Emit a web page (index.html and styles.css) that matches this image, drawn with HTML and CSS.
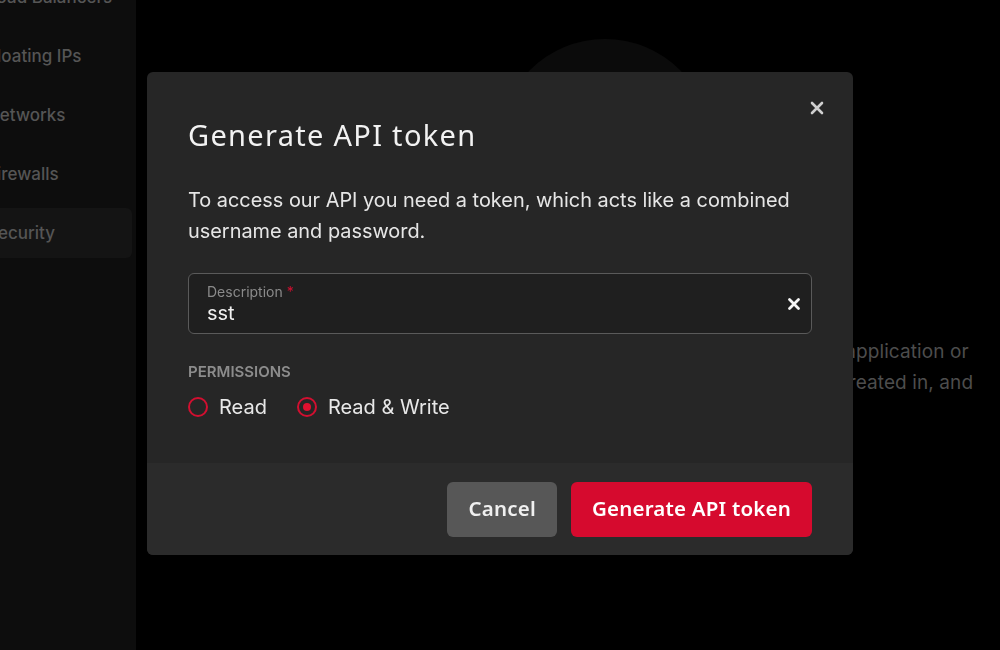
FILE: index.html
```html
<!DOCTYPE html>
<html lang="en">
<head>
<meta charset="utf-8">
<title>Generate API token</title>
<link rel="stylesheet" href="styles.css">
</head>
<body>
<div class="app">
  <aside class="sidebar">
    <ul class="nav">
      <li class="nav-item">Load Balancers</li>
      <li class="nav-item">Floating IPs</li>
      <li class="nav-item">Networks</li>
      <li class="nav-item">Firewalls</li>
      <li class="nav-item active">Security</li>
    </ul>
  </aside>
  <main class="main">
    <div class="empty">
      <div class="empty-art"></div>
      <p class="empty-text">API tokens allow you to access all of your project from an external application or<br>script. Each token is bound to the specific project it was originally created in, and</p>
    </div>
  </main>
</div>

<div class="overlay">
  <div class="modal" role="dialog" aria-labelledby="modal-title">
    <button class="close" aria-label="Close">
      <svg width="14" height="14" viewBox="0 0 14 14"><path d="M2 2 L12 12 M12 2 L2 12" stroke="currentColor" stroke-width="2.6" stroke-linecap="round"/></svg>
    </button>
    <div class="modal-body">
      <h2 class="modal-title" id="modal-title">Generate API token</h2>
      <p class="modal-text">To access our API you need a token, which acts like a combined username and password.</p>
      <div class="field">
        <div class="field-inner">
          <span class="field-label">Description <span class="req">*</span></span>
          <span class="field-value">sst</span>
        </div>
        <span class="field-clear">
          <svg width="14" height="14" viewBox="0 0 14 14"><path d="M2.5 2.5 L11.5 11.5 M11.5 2.5 L2.5 11.5" stroke="currentColor" stroke-width="2.8" stroke-linecap="round"/></svg>
        </span>
      </div>
      <div class="perm-label">PERMISSIONS</div>
      <div class="radios">
        <label class="radio"><span class="radio-dot"></span>Read</label>
        <label class="radio"><span class="radio-dot checked"></span>Read &amp; Write</label>
      </div>
    </div>
    <div class="modal-footer">
      <button class="btn btn-secondary">Cancel</button>
      <button class="btn btn-primary">Generate API token</button>
    </div>
  </div>
</div>
</body>
</html>
```

FILE: styles.css
```css
* { box-sizing: border-box; }
html, body {
  margin: 0;
  padding: 0;
  width: 1000px;
  height: 650px;
  overflow: hidden;
  background: #000;
  font-family: "Inter", "Noto Sans", sans-serif;
}
.app {
  display: flex;
  height: 650px;
}
.sidebar {
  width: 136px;
  flex: none;
  background: #0d0d0d;
  overflow: hidden;
}
.nav {
  list-style: none;
  margin: -28px 0 0 -30px;
  padding: 0;
  width: 162px;
  display: flex;
  flex-direction: column;
  gap: 9px;
}
.nav-item {
  height: 50px;
  display: flex;
  align-items: center;
  padding-left: 17px;
  font-size: 17px;
  font-weight: 500;
  color: #555;
  white-space: nowrap;
  border-radius: 6px;
}
.nav-item.active {
  background: #141414;
}
.main {
  flex: 1;
  display: flex;
  justify-content: center;
  padding-left: 74px;
}
.empty {
  display: flex;
  flex-direction: column;
  align-items: center;
  padding-top: 39px;
}
.empty-art {
  width: 212px;
  height: 212px;
  border-radius: 50%;
  background: #0b0b0b;
}
.empty-text {
  margin: 85px 0 0;
  font-size: 19px;
  line-height: 31px;
  color: #4d4d4d;
  text-align: center;
  white-space: nowrap;
  letter-spacing: 0.1px;
}

.overlay {
  position: fixed;
  inset: 0;
  display: flex;
  justify-content: center;
  align-items: flex-start;
  padding-top: 72px;
}
.modal {
  position: relative;
  width: 706px;
  background: #262626;
  border-radius: 6px;
  overflow: hidden;
}
.close {
  position: absolute;
  right: 29px;
  top: 29px;
  width: 14px;
  height: 14px;
  padding: 0;
  border: 0;
  background: none;
  color: #cfcfcf;
  display: flex;
}
.modal-body {
  padding: 45px 41px 44px;
}
.modal-title {
  margin: 0;
  font-family: "Noto Sans", sans-serif;
  font-weight: 400;
  font-size: 29px;
  letter-spacing: 1.3px;
  line-height: 36px;
  color: #f2f2f2;
}
.modal-text {
  margin: 32px 0 0;
  font-size: 19.9px;
  line-height: 31px;
  color: #e6e6e6;
}
.field {
  margin-top: 26px;
  height: 61px;
  border: 1px solid #5a5a5a;
  border-radius: 6px;
  background: #1f1f1f;
  display: flex;
  align-items: center;
  padding: 0 10px 0 18px;
}
.field-inner {
  flex: 1;
  display: flex;
  flex-direction: column;
}
.field-label {
  font-size: 14px;
  line-height: 18px;
  color: #8a8a8a;
}
.req { color: #d20f30; }
.field-value {
  font-size: 20px;
  line-height: 24px;
  color: #f0f0f0;
}
.field-clear {
  color: #f5f5f5;
  display: flex;
}
.perm-label {
  margin-top: 28px;
  font-size: 15px;
  line-height: 20px;
  font-weight: 600;
  color: #8c8c8c;
}
.radios {
  margin-top: 13px;
  display: flex;
  gap: 30px;
}
.radio {
  display: flex;
  align-items: center;
  gap: 11px;
  font-size: 20px;
  line-height: 24px;
  color: #e8e8e8;
}
.radio-dot {
  width: 20px;
  height: 20px;
  border: 2px solid #d20f30;
  border-radius: 50%;
  display: flex;
  align-items: center;
  justify-content: center;
}
.radio-dot.checked::after {
  content: "";
  width: 8px;
  height: 8px;
  border-radius: 50%;
  background: #e0102f;
}
.modal-footer {
  background: #2b2b2b;
  display: flex;
  justify-content: flex-end;
  gap: 14px;
  padding: 19px 41px 18px;
}
.btn {
  height: 55px;
  border: 0;
  border-radius: 6px;
  font-family: "Noto Sans", sans-serif;
  font-weight: 600;
  font-size: 20.5px;
  letter-spacing: 0.2px;
  color: #f0f0f0;
  padding: 0 21px 3px;
}
.btn-secondary { background: #575757; }
.btn-primary { background: #d60a2e; color: #fff; }
```
